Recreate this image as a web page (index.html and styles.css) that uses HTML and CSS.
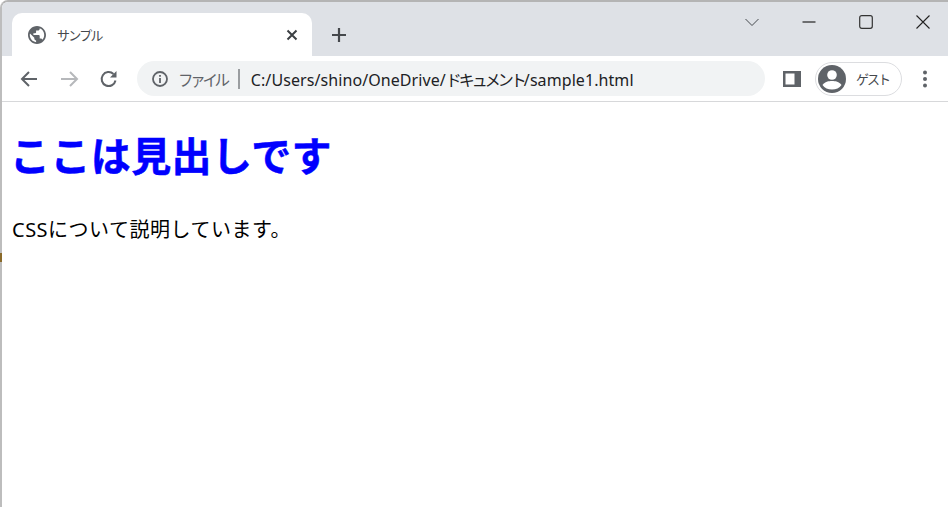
FILE: index.html
```html
<!DOCTYPE html>
<html lang="ja">
<head>
<meta charset="utf-8">
<title>サンプル</title>
<link rel="stylesheet" href="styles.css">
</head>
<body>
<div class="window">
  <div class="tabstrip">
    <div class="tab">
      <svg class="globe" width="18" height="18" viewBox="2 2 20 20"><path fill="#5f6368" d="M12 2C6.480 2 2 6.480 2 12s4.480 10 10 10 10-4.480 10-10S17.520 2 12 2zm-1 17.930c-3.950-.49-7-3.850-7-7.930 0-.62.08-1.210.21-1.790L9 15v1c0 1.100.9 2 2 2v1.930zm6.900-2.540c-.26-.81-1-1.390-1.900-1.390h-1v-3c0-.55-.45-1-1-1H8v-2h2c.55 0 1-.45 1-1V7h2c1.100 0 2-.9 2-2v-.41c2.930 1.190 5 4.060 5 7.410 0 2.080-.8 3.970-2.100 5.390z"/></svg>
      <span class="tab-title">サンプル</span>
      <svg class="tab-close" width="12" height="12" viewBox="0 0 12 12"><path d="M1.500 1.500 10.500 10.500M10.500 1.500 1.500 10.500" stroke="#3c4043" stroke-width="2" fill="none"/></svg>
    </div>
    <svg class="newtab" width="16" height="16" viewBox="0 0 16 16"><path d="M8 1V15M1 8H15" stroke="#45484c" stroke-width="2.200" fill="none"/></svg>
    <div class="caption">
      <svg width="14" height="14" viewBox="0 0 14 14"><path d="M.5 4 7 10.500 13.500 4" stroke="#45484c" fill="none"/></svg>
      <svg width="14" height="14" viewBox="0 0 14 14"><path d="M.5 7H13.500" stroke="#222" stroke-width="1.200" fill="none"/></svg>
      <svg width="14" height="14" viewBox="0 0 14 14"><rect x=".7" y=".7" width="12.600" height="12.600" rx="2" stroke="#333" stroke-width="1.200" fill="none"/></svg>
      <svg width="14" height="14" viewBox="0 0 14 14"><path d="M.5.500 13.500 13.500M13.500.5.500 13.500" stroke="#222" stroke-width="1.100" fill="none"/></svg>
    </div>
  </div>
  <div class="toolbar">
    <svg class="navicon" width="20" height="20" viewBox="0 0 20 20"><path d="M18 10H3M10 3 3 10 10 17" stroke="#5f6368" stroke-width="2" fill="none"/></svg>
    <svg class="navicon" width="20" height="20" viewBox="0 0 20 20"><path d="M2 10H18M11 3 18 10 11 17" stroke="#b6b8bb" stroke-width="2" fill="none"/></svg>
    <svg class="navicon" width="20" height="20" viewBox="0 0 20 20"><path d="M16.500 11.500A7 7 0 1 1 14.500 5" stroke="#5f6368" stroke-width="2" fill="none"/><path d="M11 8.500H17.500V2Z" fill="#5f6368"/></svg>
    <div class="omnibox">
      <svg width="16" height="16" viewBox="0 0 16 16"><circle cx="8" cy="8" r="7" stroke="#5f6368" stroke-width="1.800" fill="none"/><path d="M8 7V12M8 4V5.800" stroke="#5f6368" stroke-width="1.800" fill="none"/></svg>
      <span class="chip">ファイル</span>
      <span class="divider"></span>
      <span class="url">C:/Users/shino/OneDrive/<span class="kana">ドキュメント</span>/sample1.html</span>
    </div>
    <svg class="sidepanel" width="18" height="18" viewBox="0 0 18 18"><path d="M0 1H18V17H0ZM2.500 3.500V14.500H11.500V3.500Z" fill="#5f6368" fill-rule="evenodd"/></svg>
    <div class="profile">
      <svg width="28" height="28" viewBox="0 0 28 28"><circle cx="14" cy="14" r="14" fill="#5f6368"/><circle cx="14" cy="10" r="4.800" fill="#fff"/><path d="M4.500 20C7 16.500 10.500 16 14 16S21 16.500 23.500 20C21.500 23 18 24.500 14 24.500S6.500 23 4.500 20Z" fill="#fff"/></svg>
      <span class="guest">ゲスト</span>
    </div>
    <svg class="menu" width="6" height="18" viewBox="0 0 6 18"><circle cx="3" cy="2.500" r="2" fill="#5f6368"/><circle cx="3" cy="9" r="2" fill="#5f6368"/><circle cx="3" cy="15.500" r="2" fill="#5f6368"/></svg>
  </div>
  <main class="page">
    <h1 class="heading">ここは見出しです</h1>
    <p class="text">CSSについて説明しています。</p>
  </main>
  <span class="edge-mark"></span>
</div>
</body>
</html>
```

FILE: styles.css
```css
* { box-sizing: border-box; }
html, body { margin: 0; height: 100%; background: #fff; overflow: hidden; }
body { font-family: "Noto Sans CJK JP", "Liberation Sans", sans-serif; }
.window { position: relative; height: 507px; display: flex; flex-direction: column; border-left: 2px solid #bdbdbd; border-top: 2px solid #b4b4b4; border-top-left-radius: 8px; }
.tabstrip { height: 54px; flex: none; background: #dee1e6; display: flex; align-items: flex-start; padding-left: 10px; border-top-left-radius: 6px; }
.tab { width: 300px; height: 43px; margin-top: 11px; background: #fff; border-radius: 10px 10px 0 0; display: flex; align-items: center; padding: 0 14px 0 16px; }
.tab-title { font-size: 13px; letter-spacing: -1.700px; color: #45484c; margin-left: 11px; flex: 1; line-height: 20px; }
.newtab { margin: 25px 0 0 19px; }
.caption { margin-left: auto; display: flex; gap: 43px; margin-top: 13px; padding-right: 18px; }
.toolbar { height: 46px; flex: none; background: #fff; border-bottom: 1px solid #d7d8da; display: flex; align-items: center; padding-left: 17px; }
.navicon { margin-right: 20px; }
.omnibox { width: 628px; height: 35px; margin-left: -2px; background: #f1f3f4; border-radius: 18px; display: flex; align-items: center; padding-left: 15px; }
.chip { font-size: 15.500px; letter-spacing: -3.300px; color: #5f6368; margin-left: 10px; }
.divider { width: 2px; height: 20px; background: #9a9da0; margin: 0 11px 0 11px; }
.url { font-size: 16px; letter-spacing: .08px; color: #202124; white-space: nowrap; font-family: "Noto Sans", "Noto Sans CJK JP", sans-serif; }
.kana { letter-spacing: -3px; font-family: "Noto Sans CJK JP", sans-serif; }
.sidepanel { margin-left: 18px; }
.profile { width: 87px; height: 34px; margin-left: 14px; border: 1px solid #dcdde0; border-radius: 17px; display: flex; align-items: center; padding-left: 2px; }
.guest { font-size: 13px; letter-spacing: -2px; color: #45484c; margin-left: 10px; }
.menu { margin-left: 20px; }
.page { flex: 1; background: #fff; padding: 10px; }
.heading { margin: 13px 0 0 -2px; font-size: 40px; letter-spacing: .4px; line-height: 58px; font-weight: 700; color: #0000ff; -webkit-text-stroke: .5px #0000ff; }
.text { margin: 33px 0 0; font-size: 20px; letter-spacing: .5px; line-height: 28px; color: #000; font-family: "Noto Sans", "Noto Sans CJK JP", sans-serif; }
.edge-mark { position: absolute; left: -2px; top: 251px; width: 2px; height: 9px; background: #8a6a2a; }
```
